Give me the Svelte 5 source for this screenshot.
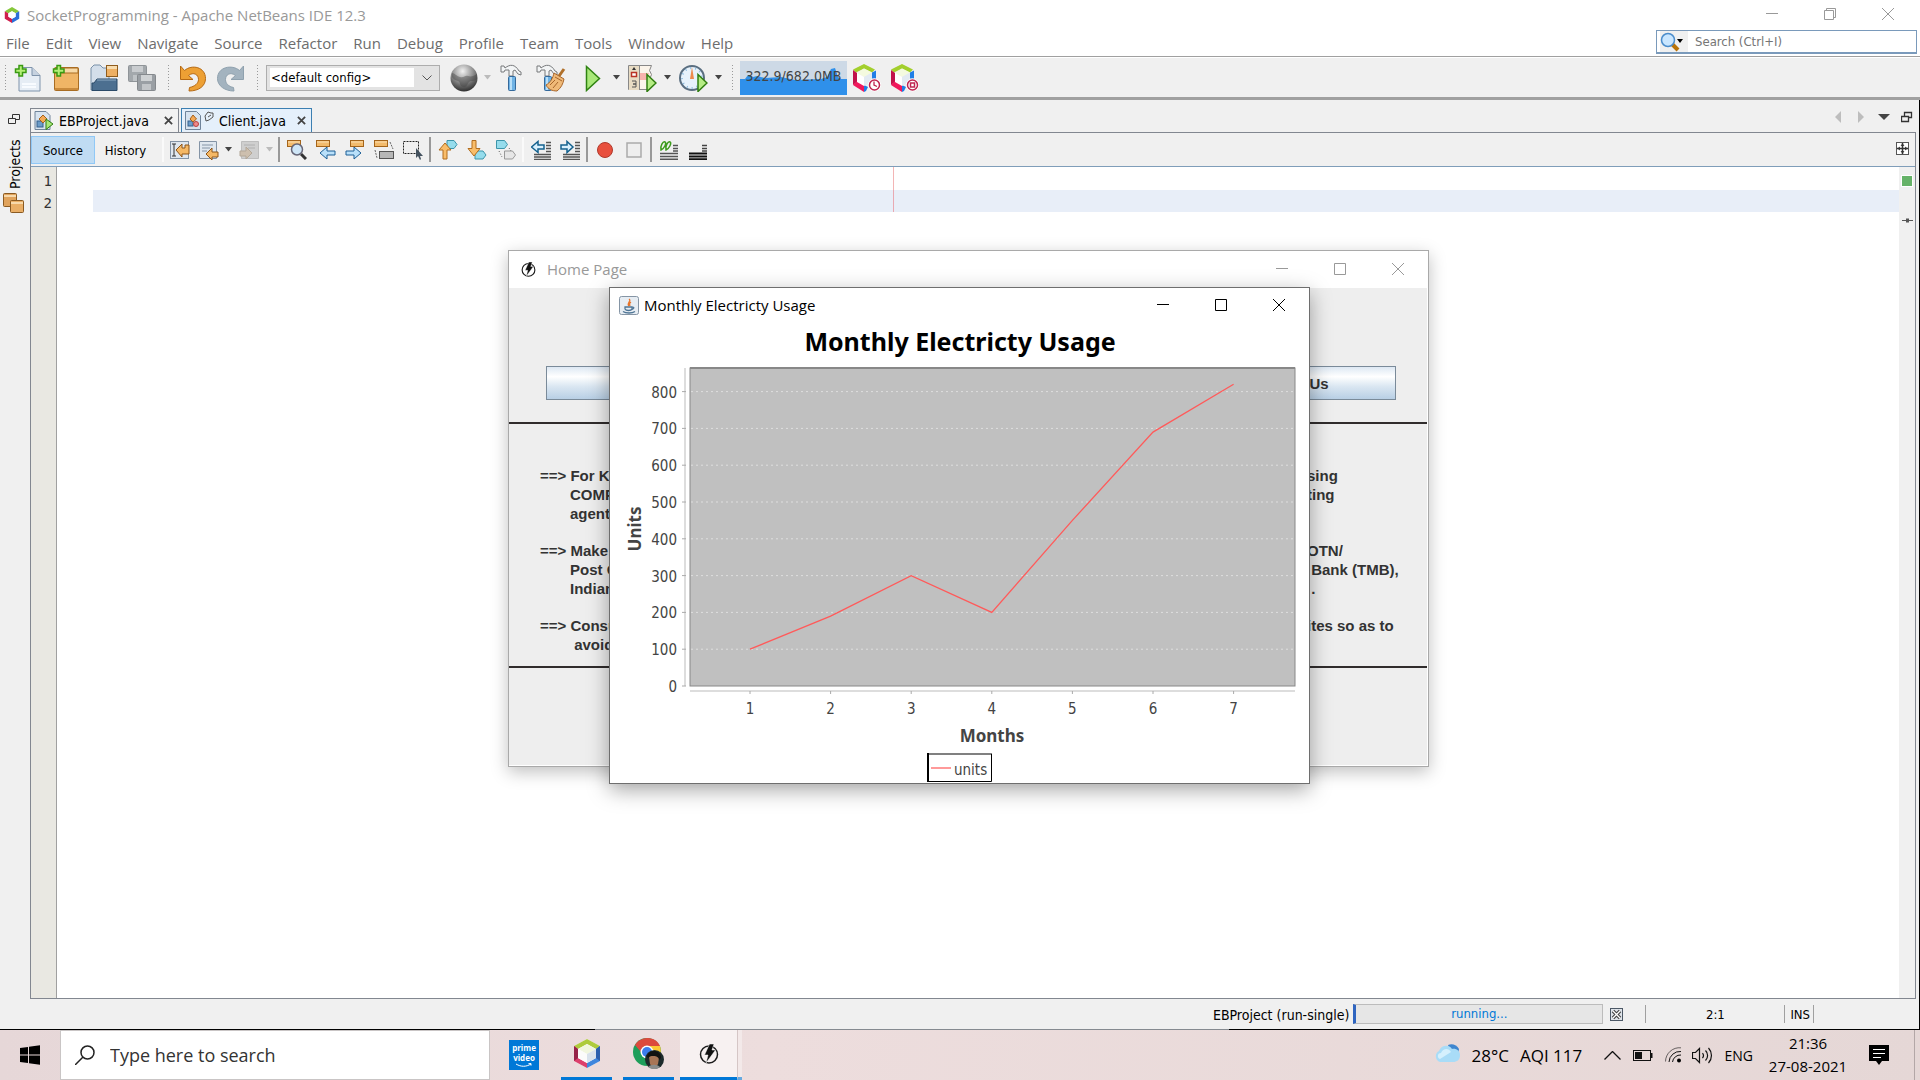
<script>
  const menus = ['File', 'Edit', 'View', 'Navigate', 'Source', 'Refactor', 'Run', 'Debug', 'Profile', 'Team', 'Tools', 'Window', 'Help'];

  const notice = [
    [['==> For K', 'sing'], ['COMP', 'ting'], ['agent', '']],
    [['==> Make', 'OTN/'], ['Post O', '\u00a0Bank (TMB),'], ['Indian', '\u00a0.']],
    [['==> Consu', 'ites so as to'], ['\u00a0avoid', '']]
  ];

  // Chart geometry, in the units of its viewBox
  const units = [100, 190, 300, 200, 450, 690, 820];
  const ticks = [0, 100, 200, 300, 400, 500, 600, 700, 800];
  const plot = { left: 80, right: 685, top: 42, bottom: 360 };
  const px = (i) => 140 + i * 80.6;
  const py = (v) => plot.bottom - v * 0.368;
  const points = units.map((v, i) => `${px(i)},${py(v)}`).join(' ');
</script>

{#snippet down(cls)}
  <svg class="caret {cls}" viewBox="0 0 9 5" aria-hidden="true"><path d="M1 0h7L4.500 4.500z" /></svg>
{/snippet}

{#snippet hex()}
  <path d="M15 1 28 8v15l-13 7L2 23V8z" fill="#fff" />
  <path d="M15 1 28 8l-4 3-9-5-9 5-4-3z" fill="#aecb3c" />
  <path d="M28 8v15l-13 7v-5l9-5v-9z" fill="#3f86dd" />
  <path d="M2 8l4 3v9l9 5v5L2 23z" fill="#dc3f6c" />
  <path d="M2 8l4 3v9l-4 3z" fill="#962348" />
  <path d="M28 8l-4 3v9l4 3z" fill="#2a5fae" />
  <path d="M15 6l9 5-9 5-9-5z" fill="#f1f6df" />
  <path d="M6 11l9 5v9l-9-5z" fill="#fbfbfb" />
  <path d="M24 11l-9 5v9l9-5z" fill="#d9e2ec" />
{/snippet}

{#snippet hexTool(kind)}
  <svg viewBox="0 0 28 28" width="28" height="28" aria-hidden="true">
    <path d="M11 0l11 5.500-3 3-8-4-8 4-3-3z" fill="#a3cf2d" />
    <path d="M19 8.500l4-2v8h-4zM11 21l4 2-2 4-2 1z" fill="#1f7ee6" />
    <path d="M0 6l4 3v9l-4 3z" fill="#c1124b" />
    <path d="M0 21l4-4 7 4v7z" fill="#f0185c" />
    <path d="M11 4.500l8 4-8 4.500-7-4z" fill="#f4fadf" />
    <path d="M4 9l7 4v9l-7-4z" fill="#fff" />
    <path d="M19 8.500L11 13v9l8-4z" fill="#e2eaf2" />
    <circle cx="21.500" cy="21" r="6.500" fill="#fff" />
    <circle cx="21.500" cy="21" r="5" fill="#fff" stroke="#bf2450" stroke-width="1.500" />
    {#if kind === 'clock'}
      <path d="M21 17.500V21l3 1.500" fill="none" stroke="#bf2450" stroke-width="1.300" />
    {:else}
      <rect x="19.500" y="19" width="4" height="4" fill="none" stroke="#bf2450" stroke-width="1.500" />
    {/if}
  </svg>
{/snippet}

{#snippet plus()}
  <path d="M5 1.500h3.500V5H12v3.500H8.500V12H5V8.500H1.500V5H5z" fill="#b4ef78" stroke="#3a9a12" stroke-width="1.500" />
{/snippet}

{#snippet hammer()}
  <path d="M1 2h3l1 2c5-4 10-4 14 3l2 1v3l-3-1-3-4-2 1v5h-4V6H5L4 8H1z" fill="#f2f4f5" stroke="#77797b" />
  <rect x="8.500" y="12.500" width="7" height="14" rx="1" fill="#6fb2e4" stroke="#34699b" />
  <path d="M11 13v13" stroke="#b8dff8" stroke-width="2" />
{/snippet}

{#snippet runMark()}
  <path d="M19 10.500l9 8.500-9 8.500z" fill="#b5ec84" stroke="#2f7d10" stroke-width="1.500" />
{/snippet}

{#snippet lightning()}
  <circle cx="10" cy="10.500" r="8.500" fill="none" stroke="#1c1c1c" stroke-width="1.500" />
  <path d="M10.500 0h4.500l-2 6h3.500L7 19l2-8H5.500z" fill="#111" stroke="#fff" stroke-width="0.500" />
{/snippet}

{#snippet boxA(x, y)}
  <rect x={x + 0.5} y={y + 0.5} width="13" height="6" fill="#f3bb6c" stroke="#a5651b" />
  <path d="M{x + 1} {y + 2}h12" stroke="#fbe0b4" />
{/snippet}

{#snippet caption(kind)}
  <div class="caption {kind}">
    <button aria-label="Minimize"><svg viewBox="0 0 12 12"><path d="M0 5.500h12" /></svg></button>
    <button aria-label="Maximize">
      <svg viewBox="0 0 12 12">
        {#if kind === 'restore'}
          <path d="M.5 2.500h9v9h-9zM2.500 2.500v-2h9v9h-2" />
        {:else}
          <path d="M.5.500h11v11H.500z" />
        {/if}
      </svg>
    </button>
    <button aria-label="Close"><svg viewBox="0 0 12 12"><path d="M0 0l12 12M12 0L0 12" /></svg></button>
  </div>
{/snippet}

<div class="screen">
  <div class="ide">
    <header class="titlebar">
      <svg class="logo" viewBox="0 0 30 31" width="16" height="16" aria-hidden="true">
        <path d="M15 0L29 8 22 12l-7-4-7 4L1 8z" fill="#86c83b" />
        <path d="M29 8v15l-14 8v-8l7-4v-7z" fill="#2c6fd8" />
        <path d="M1 8l7 4v7l7 4v8L1 23z" fill="#cf1f4c" />
        <path d="M15 8l7 4v7l-7 4-7-4v-7z" fill="#fff" />
      </svg>
      <span class="name">SocketProgramming - Apache NetBeans IDE 12.3</span>
      {@render caption('restore')}
    </header>

    <nav class="menubar">
      <div class="menus">
        {#each menus as m}<button>{m}</button>{/each}
      </div>
      <label class="quick">
        <span class="lens">
          <svg viewBox="0 0 24 20" width="24" height="20" aria-hidden="true">
            <path d="M12 12l6 6" stroke="#b87309" stroke-width="4" />
            <circle cx="8" cy="8" r="6.500" fill="#c9e6ff" stroke="#4a8ccb" stroke-width="1.500" />
            <path d="M17 7h6l-3 4z" fill="#000" />
          </svg>
        </span>
        <input type="text" aria-label="Search" placeholder="Search (Ctrl+I)" />
      </label>
    </nav>

    <div class="toolbar">
      <span class="grip"></span>
      <button class="tool" aria-label="New File">
        <svg viewBox="0 0 28 28" width="28" height="28">
          <path d="M5 3.500h13l8 8V27H5z" fill="#e6edf5" stroke="#7f93ab" /><path d="M18 3.500v8h8" fill="#c6d2e0" stroke="#7f93ab" />
          <path d="M8 20h14M8 23h14" stroke="#f8fbff" stroke-width="2" />{@render plus()}
        </svg>
      </button>
      <button class="tool" aria-label="New Project">
        <svg viewBox="0 0 28 28" width="28" height="28">
          <rect x="2.500" y="3.500" width="24" height="23" rx="1" fill="#f0b566" stroke="#a96d23" /><path d="M3 4h23v5H3z" fill="#f7d9a6" stroke="#a96d23" />
          <path d="M3 25h23" stroke="#c98a3c" stroke-width="2" />{@render plus()}
        </svg>
      </button>
      <button class="tool" aria-label="Open Project">
        <svg viewBox="0 0 28 28" width="28" height="28">
          <path d="M1 26V4l3-3h6l3 3h6v22z" fill="#d3deea" stroke="#7990a8" />
          <rect x="16.500" y="1.500" width="11" height="11" fill="#eeb064" stroke="#8f5c1d" /><path d="M17 2h10v3H17z" fill="#f8dcae" />
          <path d="M2 26V19h2l3-4h20v11.500H2z" fill="#4c6f90" stroke="#2b4a68" /><path d="M7 16h19" stroke="#8eabc4" />
        </svg>
      </button>
      <button class="tool" aria-label="Save All">
        <svg viewBox="0 0 28 28" width="28" height="28">
          <rect x="0.500" y="1.500" width="18" height="16" rx="1" fill="#a3a8ac" stroke="#8f9498" /><rect x="4" y="2" width="11" height="6" fill="#c9cccf" /><rect x="5" y="11" width="9" height="6" fill="#bfc3c6" />
          <rect x="9.500" y="10.500" width="18" height="16" rx="1" fill="#9a9fa4" stroke="#85898d" /><rect x="13" y="11" width="11" height="6" fill="#cfd2d4" /><rect x="14" y="20" width="9" height="6" fill="#c2c5c8" />
        </svg>
      </button>
      <span class="grip wide"></span>
      <button class="tool" aria-label="Undo">
        <svg viewBox="0 0 28 28" width="28" height="28">
          <path d="M1.500 2v13.500H14l-4.500-4c5-4 10-1 10 4 0 4-4 7-9 8l-.5 3.500C20 27 26.500 22 26.500 14.500 26.500 3 13 0 5.500 6.500z" fill="#eda034" stroke="#b56a15" />
        </svg>
      </button>
      <button class="tool" aria-label="Redo">
        <svg viewBox="0 0 28 28" width="28" height="28">
          <path d="M26.500 2v13.500H14l4.500-4c-5-4-10-1-10 4 0 4 3 7 8 8l.5 3.500C8 27 .5 22 .5 14.500.5 3 15 0 22.500 6.500z" fill="#a3b3bf" stroke="#8fa1ae" />
        </svg>
      </button>
      <span class="grip wide"></span>
      <label class="combo">
        <select aria-label="Configuration"><option>&lt;default config&gt;</option></select>
        <svg viewBox="0 0 10 6" width="10" height="6"><path d="M.5.500L5 5 9.500.500" fill="none" stroke="#555" /></svg>
      </label>
      <button class="tool" aria-label="Browser">
        <svg viewBox="0 0 28 28" width="28" height="28">
          <defs><radialGradient id="globe" cx="0.45" cy="0.25" r="0.8"><stop offset="0" stop-color="#f2f2f2" /><stop offset="0.5" stop-color="#8d8d8d" /><stop offset="1" stop-color="#222" /></radialGradient></defs>
          <circle cx="14" cy="14" r="13.500" fill="url(#globe)" />
          <path d="M2 9c3 0 4 3 8 4s5-2 8-1 6 0 9-2v5c-3 3-6 1-8 3s-2 6-6 5-2-5-5-6-5-2-6-4z" fill="#3e3e3e" opacity="0.4" />
        </svg>
      </button>
      {@render down('pale')}
      <button class="tool" aria-label="Build">
        <svg viewBox="0 0 28 28" width="28" height="28"><g transform="translate(3 0)">{@render hammer()}</g></svg>
      </button>
      <button class="tool clean" aria-label="Clean and Build">
        <svg viewBox="0 0 30 28" width="30" height="28">
          {@render hammer()}
          <path d="M28 5l-5 7" stroke="#b0702a" stroke-width="3" /><path d="M18 9l10 6c-1 5-3 9-7 12-5 0-9-2-11-6 4-2 7-7 8-12z" fill="#efb978" stroke="#a8652a" />
          <path d="M19 13l7 4M14 21l5-5M17 24l5-6" stroke="#a8652a" />
        </svg>
      </button>
      <button class="tool run" aria-label="Run">
        <svg viewBox="0 0 28 28" width="28" height="28"><path d="M7.500 2.500l13 12-13 12z" fill="#a8e878" stroke="#2f8312" stroke-width="1.500" /></svg>
      </button>
      {@render down('after')}
      <button class="tool" aria-label="Debug">
        <svg viewBox="0 0 29 28" width="29" height="28">
          <path d="M.5 1.500h23l-2 5 2 4-2 5 2 5-2 5H.500z" fill="#fbf4ea" stroke="#888" /><rect x="1" y="2" width="10" height="24" fill="#e8dcc4" />
          <path d="M11.500 2v24" stroke="#888" /><path d="M12 9h9l-2 4 2 3h-9z" fill="#f9b3ad" /><path d="M6 3l2 3H4z" fill="#333" />
          <rect x="3.500" y="8.500" width="5" height="4" fill="#fff" stroke="#b93426" stroke-width="1.500" />
          <path d="M4 17h4v3H5h3v3H4" fill="none" stroke="#555" />{@render runMark()}
        </svg>
      </button>
      {@render down('gapped')}
      <button class="tool" aria-label="Profile">
        <svg viewBox="0 0 29 28" width="29" height="28">
          <circle cx="13" cy="14" r="12" fill="#e7f2fb" stroke="#5a6e80" stroke-width="2" /><circle cx="13" cy="14" r="10" fill="none" stroke="#89b8dc" stroke-dasharray="1 4" stroke-width="2" />
          <path d="M13 3l2 12h-4z" fill="#ee8b4e" />{@render runMark()}
        </svg>
      </button>
      {@render down('gapped')}
      <span class="grip wide"></span>
      <button class="memory" aria-label="Memory usage">
        <svg viewBox="0 0 107 34" preserveAspectRatio="none" aria-hidden="true">
          <path d="M0 18l5 0 3-4 5 2 4-1 8 2 16-1 14 3 26-1 6-2 4-8 4-1 3 9 3 2 6 0V34H0z" fill="#2f90ea" />
        </svg>
        <span>322.9/682.0MB</span>
      </button>
      <button class="tool" aria-label="Profile IDE">{@render hexTool('clock')}</button>
      <button class="tool" aria-label="Stop profiling">{@render hexTool('stop')}</button>
    </div>

    <div class="workspace">
      <aside class="rail">
        <svg viewBox="0 0 12 12" width="12" height="12"><path d="M.5 5.500h7v5h-7zM4.500 5V1.500h7v5H8" fill="none" stroke="#333" /></svg>
        <button class="projects">Projects</button>
        <svg viewBox="0 0 21 21" width="21" height="21">
          <rect x="0.500" y="0.500" width="13" height="13" rx="1" fill="#e0a35c" stroke="#8a5a22" /><path d="M1 3h12" stroke="#f7d9ab" stroke-width="2" />
          <rect x="7.500" y="7.500" width="13" height="12" rx="1" fill="#e9ae66" stroke="#8a5a22" /><path d="M8 10h12" stroke="#f7d9ab" stroke-width="2" />
        </svg>
      </aside>

      <section class="documents">
        <div class="tabs">
          <div class="tab">
            <svg viewBox="0 0 20 19" width="20" height="19">
              <path d="M1 .5h11l4 4v14H1z" fill="#d7e3ef" stroke="#70849a" /><rect x="3" y="10" width="6" height="6" fill="#6c9cc8" stroke="#36618c" /><path d="M9 4l4 4-4 4-4-4z" fill="#f3a956" stroke="#a5601a" /><path d="M12 8l7 5-7 5.500z" fill="#a8e878" stroke="#2f7d10" />
            </svg>
            <button class="name">EBProject.java</button>
            <button class="x" aria-label="Close EBProject.java"><svg viewBox="0 0 10 10" width="9" height="9"><path d="M1 1l8 8M9 1L1 9" /></svg></button>
          </div>
          <div class="tab active">
            <svg viewBox="0 0 16 19" width="16" height="19">
              <path d="M.5.500h11l4 4v14H.500z" fill="#d7e3ef" stroke="#70849a" /><rect x="3" y="10" width="5" height="5" fill="#6c9cc8" stroke="#36618c" /><path d="M8 4l3.500 4L8 11 5 8z" fill="#f3a956" stroke="#a5601a" /><circle cx="11" cy="13" r="2.500" fill="#ee8a8a" stroke="#b84040" />
            </svg>
            <svg class="badge" viewBox="0 0 10 11" width="10" height="11"><path d="M2 10L1 5l3-4 3 1 2 0 0 4-4 3zM4 6l3-2" fill="none" stroke="#555" /></svg>
            <button class="name">Client.java</button>
            <button class="x" aria-label="Close Client.java"><svg viewBox="0 0 10 10" width="9" height="9"><path d="M1 1l8 8M9 1L1 9" /></svg></button>
          </div>
          <div class="tabtools">
            <svg viewBox="0 0 12 12" width="12" height="12"><path d="M9 0v12L3 6z" fill="#bdbdbd" /></svg>
            <svg viewBox="0 0 12 12" width="12" height="12"><path d="M3 0v12l6-6z" fill="#bdbdbd" /></svg>
            <svg viewBox="0 0 12 12" width="12" height="12"><path d="M0 3h12L6 9z" fill="#444" /></svg>
            <svg viewBox="0 0 12 12" width="12" height="12"><path d="M.5 5.500h7v5h-7zM3.500 5V1.500h7v5H8" fill="none" stroke="#333" stroke-width="1.300" /></svg>
          </div>
        </div>

        <div class="panel">
          <div class="edtools">
            <button class="view on">Source</button>
            <button class="view">History</button>
            <span class="sep light"></span>
            <button aria-label="Last edit"><svg viewBox="0 0 20 20"><rect x="0.500" y="1.500" width="18" height="17" fill="#dfe7ef" stroke="#8494a6" /><path d="M2 4h4M4 4v12M2 16h4" stroke="#333" fill="none" /><path d="M6 10l6-6v4h3V5h4v9h-7v3z" fill="#f5b865" stroke="#8d5518" /></svg></button>
            <button aria-label="Back"><svg viewBox="0 0 20 20"><path d="M.5 1.500h17v17H.500z" fill="#dfe7ef" stroke="#8494a6" /><path d="M3 5h11M3 8h8M3 11h5" stroke="#8494a6" /><path d="M7 14l6-6v4h6v5h-6v3z" fill="#f5b865" stroke="#8d5518" /></svg></button>
            {@render down('')}
            <button aria-label="Forward"><svg viewBox="0 0 20 20"><path d="M2.500 1.500h17v17h-17z" fill="#cfcfcf" stroke="#bdbdbd" /><path d="M5 5h11M9 8h7" stroke="#b0b0b0" /><path d="M13 13L7 7v4H1v5h6v3z" fill="#cdbfae" stroke="#b3a797" /></svg></button>
            {@render down('pale gapped')}
            <span class="sep"></span>
            <button aria-label="Find Selection"><svg viewBox="0 0 20 20">{@render boxA(0, 0)}<path d="M14 14l5 5" stroke="#333" stroke-width="3" /><circle cx="10" cy="9.500" r="5.500" fill="#cfe6f7" stroke="#667" stroke-width="1.500" /></svg></button>
            <button aria-label="Find Previous"><svg viewBox="0 0 20 20">{@render boxA(0, 0)}<path d="M4 13l7-6v4h8v4h-8v4z" fill="#b9e0fa" stroke="#1c5f96" /></svg></button>
            <button aria-label="Find Next"><svg viewBox="0 0 20 20">{@render boxA(5, 0)}<path d="M16 13L9 7v4H1v4h8v4z" fill="#b9e0fa" stroke="#1c5f96" /></svg></button>
            <button aria-label="Toggle Highlight"><svg viewBox="0 0 20 20">{@render boxA(0, 0)}<rect x="5.500" y="11.500" width="14" height="7" fill="#b7b7b7" stroke="#555" /><path d="M16 2l3 7M1 10l2 8" stroke="#666" stroke-dasharray="2 1" /></svg></button>
            <button aria-label="Rectangular Selection"><svg viewBox="0 0 20 20"><rect x="0.500" y="1.500" width="15" height="12" fill="none" stroke="#222" stroke-dasharray="2 1" /><path d="M13 8v10l2-2 2 4 1-1-1-3h3z" fill="#44525f" /></svg></button>
            <span class="sep"></span>
            <button aria-label="Previous Bookmark"><svg viewBox="0 0 20 20"><path d="M9 .5h7l3 4-3 4H9z" fill="#95dcec" stroke="#3c95aa" /><path d="M7 3l6 7h-4v9H5v-9H1z" fill="#f9bd6a" stroke="#b26d1e" /></svg></button>
            <button aria-label="Next Bookmark"><svg viewBox="0 0 20 20"><path d="M8 11h8l3 4-3 4H8z" fill="#95dcec" stroke="#3c95aa" /><path d="M5 .500h4v8h4L7 16 1 8.500h4z" fill="#f9bd6a" stroke="#b26d1e" /></svg></button>
            <button aria-label="Toggle Bookmark"><svg viewBox="0 0 20 20"><path d="M.5.500h8l3 4-3 4h-8z" fill="#95dcec" stroke="#3c95aa" /><path d="M8.500 11h8l3 4-3 4h-8z" fill="#e6e6e6" stroke="#999" /><path d="M3 11l3 6M13 8l2 3" stroke="#555" stroke-dasharray="1 2" /></svg></button>
            <span class="sep light"></span>
            <button aria-label="Shift Line Left"><svg viewBox="0 0 20 20"><path d="M.5 7L7 1.500V5h6v4H7v3.500z" fill="#d9f0fd" stroke="#14618e" stroke-width="1.500" /><path d="M15 2.500h5M15 5.500h5M15 8.500h5M15 11.500h5M3 14.500h17M3 17h17M3 19.500h17" stroke="#555" stroke-width="1.500" /></svg></button>
            <button aria-label="Shift Line Right"><svg viewBox="0 0 20 20"><path d="M13 7L7 1.500V5H1v4h6v3.500z" fill="#d9f0fd" stroke="#14618e" stroke-width="1.500" /><path d="M15 2.500h5M15 5.500h5M15 8.500h5M15 11.500h5M3 14.500h17M3 17h17M3 19.500h17" stroke="#555" stroke-width="1.500" /></svg></button>
            <span class="sep"></span>
            <button aria-label="Record Macro"><svg viewBox="0 0 20 20"><circle cx="10" cy="10" r="7.500" fill="#e8503e" stroke="#b0392c" /></svg></button>
            <button aria-label="Stop Macro"><svg viewBox="0 0 20 20"><rect x="3" y="3" width="14" height="14" fill="#eee" stroke="#aaa" stroke-width="1.500" /></svg></button>
            <span class="sep"></span>
            <button aria-label="Comment"><svg viewBox="0 0 20 20"><path d="M2 10C1 6 4 1 6 2S5 9 2 10zM7 10C6 6 9 1 11 2s-1 7-4 8z" fill="none" stroke="#3c9b1d" stroke-width="1.500" /><path d="M14 5.500h5M14 8.500h5M14 11h5M1 13.500h18M1 16.500h18M1 19.200h18" stroke="#555" stroke-width="1.500" /></svg></button>
            <button aria-label="Uncomment"><svg viewBox="0 0 20 20"><path d="M14 5.500h5M14 8.500h5M14 11h5" stroke="#444" stroke-width="1.500" /><path d="M1 13.500h18M1 16.500h18M1 19.200h18" stroke="#111" stroke-width="1.800" /></svg></button>
            <svg class="split" viewBox="0 0 13 13" width="13" height="13"><rect x="0.500" y="0.500" width="12" height="12" fill="#fff" stroke="#555" /><path d="M6.500 1v11M1 6.500h11" stroke="#333" stroke-width="1.500" /><path d="M5 4l1.500-2L8 4M5 9l1.500 2L8 9M4 5L2 6.500 4 8M9 5l2 1.500L9 8" fill="none" stroke="#333" /></svg>
          </div>

          <div class="editor">
            <div class="gutter"><span>1</span><span>2</span></div>
            <div class="code">
              <div class="line"></div>
              <div class="line current"></div>
            </div>
            <div class="stripe">
              <span class="ok"></span>
              <svg viewBox="0 0 11 5" width="11" height="5"><path d="M0 2.500h11" stroke="#555" /><rect x="4" y="0.500" width="3" height="4" fill="#555" /></svg>
            </div>
          </div>
        </div>
      </section>
    </div>

    <footer class="status">
      <span class="job">EBProject (run-single)</span>
      <div class="progress" role="progressbar" aria-label="EBProject (run-single)">running...</div>
      <button class="cancel" aria-label="Cancel"><svg viewBox="0 0 13 13" width="13" height="13"><rect x="0.500" y="0.500" width="12" height="12" fill="#dfe4ea" stroke="#4c5866" /><path d="M3 3l7 7M10 3l-7 7" stroke="#444" stroke-width="3.500" /><path d="M3 3l7 7M10 3l-7 7" stroke="#fff" stroke-width="1.300" /></svg></button>
      <span class="pos">2:1</span>
      <span class="mode">INS</span>
    </footer>
  </div>

  <footer class="taskbar">
    <button class="start" aria-label="Start"><svg viewBox="0 0 20 20" width="20" height="20"><path d="M0 3l8-1v7.500H0zM9 1.800L20 .3v9.200H9zM0 10.500h8V18l-8-1zM9 10.500h11v9.200l-11-1.500z" fill="#000" /></svg></button>
    <label class="search">
      <svg viewBox="0 0 20 20" width="20" height="20"><circle cx="12.500" cy="7.500" r="6.500" fill="none" stroke="#222" stroke-width="1.500" /><path d="M8 12l-8 8" stroke="#222" stroke-width="1.500" /></svg>
      <input type="text" aria-label="Taskbar search" placeholder="Type here to search" />
    </label>
    <button class="app prime" aria-label="Prime Video"><span>prime</span><span>video</span><svg viewBox="0 0 16 4" width="16" height="4"><path d="M0 1c5 3 10 3 15 0M12.500 .6h2.500v2" fill="none" stroke="#fff" /></svg></button>
    <button class="app running" aria-label="NetBeans"><svg viewBox="0 0 30 31" width="30" height="31">{@render hex()}</svg></button>
    <button class="app running" aria-label="Chrome">
      <svg viewBox="0 0 31 31" width="31" height="31">
        <circle cx="14" cy="14" r="14" fill="#1e9e5a" /><path d="M2 7C8-3 23-2 27 8H14c-4 0-6 3-6 6z" fill="#dc4a3d" /><path d="M27 8c3 9-3 19-13 20l6-11c1-4-1-7-4-9z" fill="#fcc934" />
        <circle cx="14" cy="14" r="6.500" fill="#fff" /><circle cx="14" cy="14" r="5" fill="#3b7ded" />
        <circle cx="21.500" cy="21.500" r="9.500" fill="#1d2a2b" /><path d="M16 19c1-4 9-4 10 1l-1 6c-2 4-6 4-8 0z" fill="#a87556" /><path d="M14 19c1-8 14-8 14 1l-2 2c0-3-3-4-5-4s-5 0-5 2z" fill="#121212" /><path d="M15 29c3-3 9-3 12 0a9.500 9.500 0 0 1-12 0z" fill="#8b8d8c" />
      </svg>
    </button>
    <button class="app running front" aria-label="Home Page"><svg viewBox="0 0 20 20" width="20" height="20">{@render lightning()}</svg></button>
    <span class="stack"></span>

    <div class="tray">
      <svg class="cloud" viewBox="0 0 26 19" width="26" height="19"><path d="M14 1c4-2 9 0 11 4l-1 5-8-3z" fill="#3f86cf" /><path d="M6 18a6 6 0 0 1-1-11C7 1 15 0 18 5c4-1 8 2 8 6 0 5-3 7-7 7z" fill="#a9dcf7" /><path d="M6 15c-3-1-3-6 1-6 2-5 8-5 10-1z" fill="#d5f0fd" /></svg>
      <span class="weather"><span>28°C</span><span>AQI 117</span></span>
      <svg class="up" viewBox="0 0 17 9" width="17" height="9"><path d="M.5 8.500l8-8 8 8" fill="none" stroke="#111" stroke-width="1.300" /></svg>
      <svg class="bat" viewBox="0 0 20 11" width="20" height="11"><rect x="0.500" y="0.500" width="17" height="10" fill="none" stroke="#111" /><rect x="2" y="2" width="7" height="7" fill="#111" /><path d="M18.500 3v5" stroke="#111" stroke-width="2" /></svg>
      <svg class="wifi" viewBox="0 0 17 16" width="17" height="16"><g fill="none" stroke="#111"><path d="M.5 14.500A14 14 0 0 1 16 .8" opacity="0.6" /><path d="M4 15A11 11 0 0 1 16 4.500M7.500 15A8 8 0 0 1 16 8" /></g><circle cx="14" cy="13.500" r="2" /></svg>
      <svg class="vol" viewBox="0 0 21 17" width="21" height="17"><path d="M.5 5.500h3l4-4v14l-4-4h-3zM10.500 6a4 4 0 0 1 0 5M13.500 3.500a7 7 0 0 1 0 10M16.500 1a11 11 0 0 1 0 15" fill="none" stroke="#111" stroke-width="1.200" /></svg>
      <span class="lang">ENG</span>
      <div class="clock"><span>21:36</span><span>27-08-2021</span></div>
      <svg class="note" viewBox="0 0 20 20" width="20" height="20"><path d="M0 0h20v16h-7l-3 4-3-4H0z" /><path d="M4 4.500h12M4 8.500h12M4 12.500h8" stroke="#fff" /></svg>
      <span class="peek"></span>
    </div>
  </footer>

  <section class="window home" aria-label="Home Page">
    <header class="wbar">
      <svg viewBox="0 0 20 20" width="15" height="15">{@render lightning()}</svg>
      <span class="wname">Home Page</span>
      {@render caption('idle')}
    </header>
    <div class="hbody">
      <div class="hbuttons">
        <button aria-label="Home"></button>
        <button>Us</button>
      </div>
      <div class="notice">
        {#each notice as para}
          <div class="para">
            {#each para as [l, r], i}
              <div class="row" class:indent={i > 0}><span>{l}</span><span class="end">{r}</span></div>
            {/each}
          </div>
        {/each}
      </div>
    </div>
  </section>

  <section class="window chart" aria-label="Monthly Electricty Usage">
    <header class="wbar">
      <svg viewBox="0 0 20 20" width="20" height="20"><rect x="0.500" y="0.500" width="19" height="18" rx="2" fill="#e7edf3" stroke="#8595a5" /><path d="M10 3c3 2-3 4 0 7M12 6c-2 1-2 2-1 4" fill="none" stroke="#e8742a" stroke-width="1.300" /><path d="M6 11h7v2c-1 2-6 2-7 0zM13 11c3 0 2 2-1 3M4 15.500c3 2 9 2 12 0" fill="none" stroke="#4f7595" stroke-width="1.300" /></svg>
      <span class="wname">Monthly Electricty Usage</span>
      {@render caption('live')}
    </header>
    <svg class="plot" viewBox="0 -3 699 460" role="img" aria-label="Units by month">
      <text class="heading" x="350" y="25" text-anchor="middle">Monthly Electricty Usage</text>
      <rect x={plot.left} y={plot.top} width={plot.right - plot.left} height={plot.bottom - plot.top} fill="#c0c0c0" stroke="#888" />
      <path d="M{plot.left} {plot.top}H{plot.right}" stroke="#888" stroke-width="2" />
      <path d="M75 {plot.top}V{plot.bottom}M{plot.left} 365H{plot.right}" stroke="#ddd" stroke-width="2" />
      {#each ticks as t}
        {#if t > 0}<path d="M{plot.left + 1} {py(t)}H{plot.right}" class="grid" />{/if}
        <path d="M72 {py(t)}h4" stroke="#aaa" />
        <text class="label" x="67" y={py(t) + 6} text-anchor="end">{t}</text>
      {/each}
      {#each units as u, i}
        <path d="M{px(i)} 365v3" stroke="#aaa" />
        <text class="label" x={px(i)} y="388" text-anchor="middle">{i + 1}</text>
      {/each}
      <polyline {points} fill="none" stroke="#ff5a5a" stroke-width="1.300" />
      <text class="axis" x="382" y="416" text-anchor="middle">Months</text>
      <text class="axis" transform="translate(31 203) rotate(-90)" text-anchor="middle">Units</text>
      <path d="M317 428h65" stroke="#808080" stroke-width="2" />
      <path d="M318 427v29" stroke="#000" stroke-width="2" />
      <path d="M317 455.500h64.500V428" fill="none" stroke="#000" />
      <path d="M321 442h20" stroke="#ff9a9a" stroke-width="2" />
      <text class="label" x="344" y="449">units</text>
    </svg>
  </section>
</div>

<style>
  :global(body) { margin: 0; }
  .screen {
    position: relative; display: flex; flex-direction: column; min-height: 100vh;
    font-family: 'DejaVu Sans Condensed', 'DejaVu Sans', sans-serif; font-size: 13px; color: #000; overflow: hidden;
  }
  svg { display: block; flex: none; }
  button { font: inherit; color: inherit; background: none; border: 0; padding: 0; margin: 0; }
  input { font: inherit; border: 0; padding: 0; outline: 0; min-width: 0; }

  .ide { flex: 1; display: flex; flex-direction: column; background: #f0f0f0; }
  .titlebar { display: flex; align-items: center; height: 29px; background: #fff; padding: 0 3px 0 4px; font: 15px 'Open Sans', sans-serif; color: #999; }
  .titlebar .name { flex: 1; padding-left: 7px; }
  .caption { display: flex; align-self: stretch; padding-bottom: 2px; }
  .caption button { width: 58px; display: grid; place-items: center; }
  .caption svg { width: 12px; height: 12px; fill: none; stroke: #999; overflow: visible; }
  .caption.live svg { stroke: #000; }

  .menubar { display: flex; height: 27px; background: #fff; border-bottom: 1px solid #a0a0a0; padding-right: 3px; box-shadow: 0 1px 0 #fff; }
  .menus { flex: 1; display: flex; padding: 0 0 0 6px; gap: 16px; font: 15px 'Open Sans', sans-serif; color: #6d6d6d; }
  .menus button { line-height: 28px; padding-bottom: 2px; }
  .quick { display: flex; width: 256px; height: 21px; margin-top: 1px; border: 1px solid #7a9abb; border-bottom-width: 2px; padding-left: 3px; background: #fff; }
  .lens { width: 28px; background: #f0f0f0; display: grid; align-items: center; }
  .quick input { flex: 1; padding-left: 7px; font-size: 13px; }
  .quick input::placeholder { color: #757575; opacity: 1; }

  .toolbar { display: flex; align-items: center; height: 39px; border-bottom: 3px solid #a0a0a0; padding: 0 0 0 4px; margin-top: 1px; }
  .grip { width: 3px; height: 28px; margin-right: 2px; background: radial-gradient(circle, #9a9a9a 1px, #f0f0f0 1px) 0 0 / 3px 3px; flex: none; }
  .grip.wide { margin: 0 4px 0 6px; }
  .tool { width: 38px; height: 38px; display: grid; place-items: center; flex: none; }
  .tool.clean { margin-left: 2px; }
  .tool.run { margin-left: 4px; }
  .caret { width: 9px; height: 5px; fill: #444; }
  .caret.pale { fill: #bbb; }
  .caret.after { margin-right: 2px; }
  .caret.gapped { margin: 0 2px; }
  .combo { display: flex; align-items: center; box-sizing: border-box; width: 174px; height: 26px; margin: 0 5px 0 3px; border: 1px solid #adadad; background: #e3e3e3; padding: 3px 7px 3px 3px; gap: 8px; }
  .combo select { flex: 1; height: 19px; appearance: none; border: 0; background: #fff; font: inherit; font-size: 13px; padding: 0 1px; color: #000; }
  .memory { display: grid; width: 107px; height: 34px; margin: 0 1px 0 2px; background: #cdd9e6; color: #444; font-size: 14px; flex: none; }
  .memory svg { grid-area: 1 / 1; width: 107px; height: 34px; }
  .memory span { grid-area: 1 / 1; place-self: center; padding-bottom: 3px; }

  .workspace { flex: 1; display: flex; border-right: 1px solid #000; }
  .rail { width: 30px; display: flex; flex-direction: column; align-items: center; padding-top: 13px; box-sizing: border-box; flex: none; }
  .projects { writing-mode: vertical-rl; transform: rotate(180deg); font-size: 14px; line-height: 20px; margin: 10px 0 0; padding: 0; height: 58px; }
  .rail svg { margin-right: 3px; }
  .documents { flex: 1; display: flex; flex-direction: column; min-width: 0; padding-right: 3px; }
  .tabs { display: flex; height: 24px; margin-top: 8px; gap: 2px; }
  .tab { display: flex; align-items: center; box-sizing: border-box; width: 149px; border: 1px solid #828790; border-bottom: 0; padding: 0 4px 0 3px; background: #f2f2f2; }
  .tab .name { flex: 1; text-align: left; padding: 1px 0 0 5px; font-size: 14px; white-space: nowrap; }
  .tab.active { width: 131px; background: #e5f0fb; border-color: #3c7fb1; }
  .tab .badge { align-self: flex-start; margin: 2px 0 0 3px; }
  .x { padding: 0 1px; }
  .x svg { fill: none; stroke: #444; stroke-width: 2; }
  .tabtools { margin-left: auto; display: flex; gap: 11px; padding: 3px 3px 0 0; }

  .panel { flex: 1; display: flex; flex-direction: column; border: 1px solid #828790; }
  .edtools { display: flex; align-items: center; height: 33px; border-bottom: 1px solid #7f9db9; }
  .edtools button { width: 29px; height: 28px; display: grid; place-items: center; flex: none; padding-top: 1px; }
  .edtools button svg { width: 20px; height: 20px; }
  .edtools .view { width: 61px; font-size: 13px; }
  .edtools .view.on { width: 64px; background: #c0dcf3; box-shadow: inset 0 0 0 1px #90c8f6; }
  .edtools .caret { margin: 0 1px; }
  .edtools .caret.gapped { margin: 0 2px; }
  .sep { width: 2px; height: 25px; margin: 0 2px; background: #999; flex: none; }
  .sep.light { background: #fafafa; }
  .view + .sep { margin: 0 1px 0 6px; }
  .split { margin: 0 6px 2px auto; }

  .editor { flex: 1; display: flex; background: #fff; }
  .gutter { width: 26px; background: #e9e8e2; border-right: 1px solid #a0a0a0; display: flex; flex-direction: column; font: 14px/22px 'DejaVu Sans Mono', monospace; text-align: right; padding: 3px 4px 0 0; box-sizing: border-box; color: #333; }
  .code { flex: 1; padding: 1px 0 0 36px; background: linear-gradient(#f3b5b5, #f3b5b5) 836px 0 / 1px 44px no-repeat; }
  .line { height: 22px; }
  .line.current { background: linear-gradient(#e9a9b2, #e9a9b2) 800px 0 / 1px 22px no-repeat #e8eef8; }
  .stripe { width: 16px; background: #f0f0f0; padding-left: 3px; box-sizing: border-box; }
  .ok { display: block; width: 10px; height: 10px; margin: 9px 0 32px; background: #65b268; box-shadow: 0 0 0 1px #fff; }

  .status { display: flex; align-items: center; height: 30px; flex: none; font-size: 13px; border-right: 1px solid #000; justify-content: flex-end; }
  .job { padding: 2px 4px 0 0; font-size: 14px; }
  .progress { box-sizing: border-box; width: 250px; height: 20px; border: 1px solid #bcbcbc; border-left: 3px solid #2f65c0; background: #e6e6e6; color: #0078d7; text-align: center; line-height: 18px; }
  .cancel { padding: 0 22px 0 7px; }
  .pos { width: 138px; border-left: 1px solid #a0a0a0; height: 18px; line-height: 20px; text-align: center; padding: 0; }
  .mode { border: 1px solid #a0a0a0; border-width: 0 1px; padding: 0 3px 0 5px; margin-right: 105px; height: 18px; line-height: 20px; }

  .taskbar { display: flex; height: 50px; flex: none; border-top: 1px solid #000; border-image: linear-gradient(90deg, #000 31%, #858a90 31% 64%, #000 64%) 1; background: linear-gradient(90deg, #e6d7d8, #eddddd 40%, #e5d7d6); font: 16px 'Open Sans', sans-serif; }
  .start { width: 60px; display: grid; place-items: center; }
  .search { display: flex; align-items: center; box-sizing: border-box; width: 430px; border: 1px solid #c9c5c5; background: #fff; padding-left: 14px; gap: 15px; }
  .search input { flex: 1; font-size: 18px; }
  .search input::placeholder { color: #333; opacity: 1; }
  .app { box-sizing: border-box; width: 51px; display: grid; place-items: center; margin-right: 11px; border-bottom: 3px solid transparent; }
  .app.running { border-color: #0078d7; }
  .app.prime { width: 30px; height: 30px; margin: 10px 22px 0 19px; border: 0; background: #0078d7; color: #fff; font: bold 8px/10px 'Open Sans', sans-serif; align-content: center; }
  .app.front { width: 57px; background: #f7f1f1; margin: 0 0 0 -5px; }
  .stack { width: 4px; border-left: 1px solid #d5c6c6; border-bottom: 3px solid #66a9e0; background: #f3e9e9; }
  .tray { margin-left: auto; display: flex; align-items: center; }
  .cloud { margin: 0 12px 4px 0; }
  .weather { display: flex; gap: 11px; width: 113px; white-space: nowrap; margin-right: 19px; font-size: 17px; }
  .up { margin-right: 12px; }
  .bat { margin-right: 12px; }
  .wifi { margin-right: 10px; }
  .vol { margin-right: 12px; }
  .lang { font-size: 14px; }
  .clock { display: flex; flex-direction: column; width: 80px; align-items: center; font-size: 15px; line-height: 23px; margin: 0 21px 0 15px; white-space: nowrap; }
  .note { margin-right: 25px; }
  .peek { border-left: 1px solid #b3a7a7; width: 5px; align-self: stretch; }

  .window { position: absolute; background: #fff; display: flex; flex-direction: column; box-sizing: border-box; }
  .wbar { display: flex; align-items: center; height: 37px; font: 15px 'Open Sans', sans-serif; flex: none; padding-right: 1px; }
  .wname { flex: 1; padding-bottom: 2px; }
  .home { left: 508px; top: 250px; width: 921px; height: 517px; border: 1px solid #a9a9a9; box-shadow: 0 5px 16px rgba(0, 0, 0, 0.25); }
  .home .wbar { padding-left: 12px; color: #999; gap: 11px; }
  .hbody { flex: 1; margin: 0 1px 1px 0; background: #eee; font: bold 15px/19px 'Liberation Sans', sans-serif; color: #333; }
  .hbuttons { display: flex; justify-content: space-between; padding: 78px 31px 22px 37px; border-bottom: 2px solid #302c2c; }
  .hbuttons button { box-sizing: border-box; width: 154px; height: 34px; border: 1px solid #7a8a99; background: linear-gradient(#dde8f3, #fff 30%, #dbe7f2 60%, #b8cfe5); }
  .notice { display: flex; flex-direction: column; gap: 18px; padding: 42px 0 12px 31px; border-bottom: 2px solid #302c2c; }
  .row { display: flex; justify-content: space-between; white-space: nowrap; }
  .row.indent > :first-child { padding-left: 30px; }
  .end { width: 120px; }

  .chart { left: 609px; top: 287px; width: 701px; height: 497px; border: 1px solid #6e6e6e; box-shadow: 0 6px 20px rgba(0, 0, 0, 0.35); }
  .chart .wbar { height: 35px; padding-left: 9px; padding-top: 1px; box-sizing: border-box; gap: 5px; }
  .plot { width: 100%; flex: 1; min-height: 0; }
  .heading { font: bold 25px 'Noto Sans', sans-serif; }
  .label { font-size: 15px; fill: #444; }
  .axis { font: bold 17px 'Noto Sans', sans-serif; fill: #444; }
  .grid { stroke: #dedede; stroke-dasharray: 2 3; }
</style>
